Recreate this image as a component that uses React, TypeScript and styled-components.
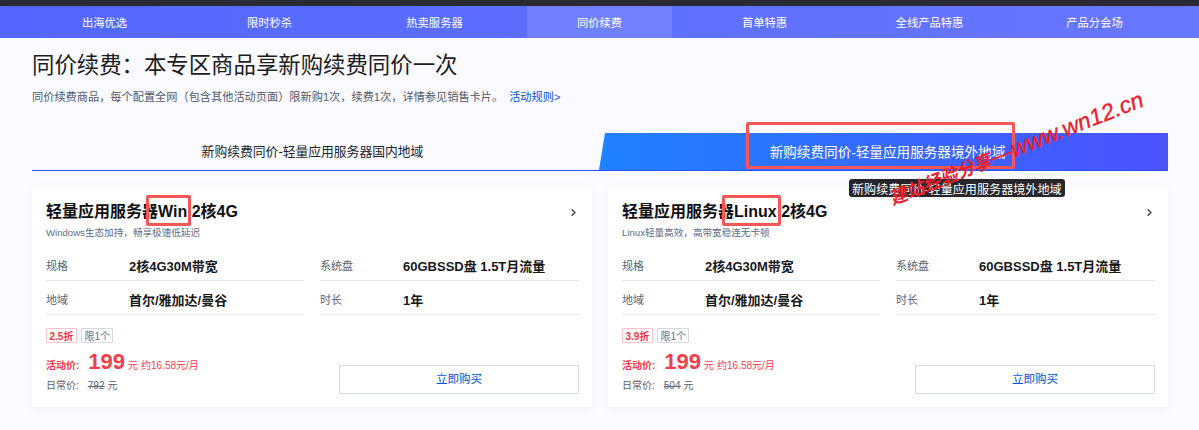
import React, { FC } from 'react';
import styled, { createGlobalStyle } from 'styled-components';
import { ChevronRight } from 'lucide-react';

const NAV_ITEMS = ['出海优选', '限时秒杀', '热卖服务器', '同价续费', '首单特惠', '全线产品特惠', '产品分会场'];

const PRODUCTS = [
  {
    os: 'Win',
    desc: 'Windows生态加持，畅享极速低延迟',
    discount: '2.5折',
    normal: '792',
  },
  {
    os: 'Linux',
    desc: 'Linux轻量高效，高带宽稳连无卡顿',
    discount: '3.9折',
    normal: '504',
  },
];

const GlobalStyle = createGlobalStyle`
  html, body {
    margin: 0;
    padding: 0;
    background: #fafaff;
  }
  body {
    font-family: 'Liberation Sans', 'Noto Sans CJK SC', sans-serif;
    width: 1199px;
    height: 430px;
    overflow: hidden;
  }
  * {
    box-sizing: border-box;
  }
`;

const Page = styled.div`
  position: relative;
  width: 1199px;
  height: 430px;
  overflow: hidden;
`;

const TopBar = styled.div`
  height: 6px;
  background: #2b2a33;
`;

const Nav = styled.nav`
  display: flex;
  justify-content: center;
  gap: 20px;
  height: 32px;
  background: linear-gradient(90deg, #5267ff, #6877ff);
`;

const NavItem = styled.a<{ $active?: boolean }>`
  width: 145px;
  display: flex;
  align-items: center;
  justify-content: center;
  font-size: 11.3px;
  color: #fff;
  background: ${(props) => (props.$active ? 'rgba(255, 255, 255, 0.12)' : 'transparent')};
`;

const Main = styled.main`
  width: 1136px;
  margin-left: 32px;
`;

const Title = styled.h1`
  margin: 14px 0 0;
  font-size: 22.4px;
  line-height: 28px;
  font-weight: 400;
  color: #1c1c22;
`;

const Intro = styled.p`
  margin: 9px 0 0;
  font-size: 11.2px;
  line-height: 16px;
  color: #4f5a6e;
`;

const RuleLink = styled.a`
  margin-left: 6px;
  color: #0052d9;
`;

const Tabs = styled.div`
  display: flex;
  margin-top: 28px;
  height: 38px;
  border-bottom: 1px solid #2b50ff;
`;

const Tab = styled.div<{ $active?: boolean }>`
  position: relative;
  flex: 1;
  display: flex;
  align-items: center;
  justify-content: center;
  padding: ${(props) => (props.$active ? '0 0 2px 8px' : '0 6px 2px 0')};
  font-size: ${(props) => (props.$active ? '13.6px' : '12.8px')};
  color: ${(props) => (props.$active ? '#fff' : '#23252b')};
  background: ${(props) =>
    props.$active ? 'linear-gradient(90deg, #1f82ff, #4b52ff)' : 'transparent'};
  clip-path: ${(props) =>
    props.$active ? 'polygon(6px 0, 100% 0, 100% 100%, 0 100%)' : 'none'};
`;

const TabMark = styled.div`
  position: absolute;
  left: 746px;
  top: 122px;
  width: 269px;
  height: 47px;
  border: 3px solid #f55656;
  border-radius: 2px;
`;

const TabTip = styled.div`
  position: absolute;
  left: 849px;
  top: 179px;
  height: 18px;
  padding: 0 3px;
  display: flex;
  align-items: center;
  font-size: 12.1px;
  color: #fff;
  background: #26262c;
  border-radius: 3px;
`;

const Watermark = styled.div`
  position: absolute;
  left: 866px;
  top: 135px;
  width: 300px;
  text-align: center;
  font-size: 18px;
  font-weight: 700;
  font-style: italic;
  white-space: nowrap;
  color: #e8212a;
  transform: rotate(-21.5deg);
`;

const WatermarkUrl = styled.span`
  font-size: 23px;
  font-weight: 400;
  -webkit-text-stroke: 0.3px #e8212a;
`;

const Cards = styled.div`
  display: flex;
  gap: 16px;
  margin-top: 16px;
`;

const Card = styled.section`
  position: relative;
  flex: 1;
  height: 220px;
  padding: 15px 13px 0 14px;
  background: #fff;
  box-shadow: 0 2px 10px rgba(60, 80, 160, 0.04);
`;

const CardHead = styled.div`
  display: flex;
  align-items: center;
  justify-content: space-between;
`;

const CardTitle = styled.h2`
  margin: 0;
  font-size: 16px;
  line-height: 20px;
  font-weight: 700;
  color: #0f1014;
`;

const Marked = styled.span`
  position: relative;
  &::after {
    content: '';
    position: absolute;
    left: -12px;
    right: -4px;
    top: -8px;
    bottom: -6px;
    border: 3px solid #f55656;
    border-radius: 2px;
  }
`;

const Arrow = styled(ChevronRight)`
  width: 11px;
  height: 11px;
  stroke-width: 3.5;
  color: #4c4f57;
`;

const CardDesc = styled.p`
  margin: 4px 0 0;
  font-size: 9.6px;
  line-height: 14px;
  color: #5d6b85;
`;

const Specs = styled.div`
  display: grid;
  grid-template-columns: 258px 259px;
  column-gap: 16px;
  margin-top: 7px;
`;

const Spec = styled.div`
  display: flex;
  align-items: center;
  height: 34px;
  padding-top: 3px;
  border-bottom: 1px solid #e7e9ee;
`;

const SpecLabel = styled.span`
  width: 83px;
  font-size: 11px;
  color: #5c6370;
`;

const SpecValue = styled.span`
  font-size: 13px;
  font-weight: 700;
  color: #17181c;
`;

const Tags = styled.div`
  display: flex;
  gap: 4px;
  margin-top: 13px;
`;

const Tag = styled.span<{ $red?: boolean }>`
  height: 15px;
  padding: 0 2.5px;
  display: flex;
  align-items: center;
  font-size: 10px;
  font-weight: ${(props) => (props.$red ? 700 : 400)};
  color: ${(props) => (props.$red ? '#f4333f' : '#5a6c8c')};
  border: 1px solid ${(props) => (props.$red ? '#fbc4c8' : '#d5d9e3')};
`;

const ActiveRow = styled.div`
  display: flex;
  align-items: baseline;
  margin-top: 6px;
  height: 26px;
  color: #f63d4a;
  font-size: 10px;
`;

const ActiveLabel = styled.span`
  font-weight: 700;
`;

const BigPrice = styled.span`
  margin: 0 3px 0 9px;
  font-size: 22px;
  font-weight: 700;
`;

const Monthly = styled.span`
  margin-left: 3px;
`;

const NormalRow = styled.div`
  margin-top: 2px;
  font-size: 10px;
  color: #5c6370;
`;

const NormalPrice = styled.s`
  margin: 0 3px 0 9px;
`;

const BuyButton = styled.button`
  position: absolute;
  right: 13px;
  bottom: 13px;
  width: 240px;
  height: 29px;
  padding: 0 0 3px;
  font-family: inherit;
  font-size: 11.5px;
  color: #0052d9;
  background: #fff;
  border: 1px solid #d6dcec;
  cursor: pointer;
`;

const ProductCard: FC<(typeof PRODUCTS)[number]> = ({ os, desc, discount, normal }) => (
  <Card>
    <CardHead>
      <CardTitle>
        轻量应用服务器<Marked>{os}</Marked> 2核4G
      </CardTitle>
      <Arrow />
    </CardHead>
    <CardDesc>{desc}</CardDesc>
    <Specs>
      <Spec>
        <SpecLabel>规格</SpecLabel>
        <SpecValue>2核4G30M带宽</SpecValue>
      </Spec>
      <Spec>
        <SpecLabel>系统盘</SpecLabel>
        <SpecValue>60GBSSD盘 1.5T月流量</SpecValue>
      </Spec>
      <Spec>
        <SpecLabel>地域</SpecLabel>
        <SpecValue>首尔/雅加达/曼谷</SpecValue>
      </Spec>
      <Spec>
        <SpecLabel>时长</SpecLabel>
        <SpecValue>1年</SpecValue>
      </Spec>
    </Specs>
    <Tags>
      <Tag $red>{discount}</Tag>
      <Tag>限1个</Tag>
    </Tags>
    <ActiveRow>
      <ActiveLabel>活动价:</ActiveLabel>
      <BigPrice>199</BigPrice>
      <span>元</span>
      <Monthly>约16.58元/月</Monthly>
    </ActiveRow>
    <NormalRow>
      日常价:
      <NormalPrice>{normal}</NormalPrice>元
    </NormalRow>
    <BuyButton>立即购买</BuyButton>
  </Card>
);

export default function App() {
  return (
    <Page>
      <GlobalStyle />
      <TopBar />
      <Nav>
        {NAV_ITEMS.map((item) => (
          <NavItem key={item} $active={item === '同价续费'}>
            {item}
          </NavItem>
        ))}
      </Nav>
      <Main>
        <Title>同价续费：本专区商品享新购续费同价一次</Title>
        <Intro>
          同价续费商品，每个配置全网（包含其他活动页面）限新购1次，续费1次，详情参见销售卡片。
          <RuleLink>活动规则&gt;</RuleLink>
        </Intro>
        <Tabs>
          <Tab>新购续费同价-轻量应用服务器国内地域</Tab>
          <Tab $active>新购续费同价-轻量应用服务器境外地域</Tab>
        </Tabs>
        <Cards>
          {PRODUCTS.map((product) => (
            <ProductCard key={product.os} {...product} />
          ))}
        </Cards>
      </Main>
      <TabMark />
      <TabTip>新购续费同价-轻量应用服务器境外地域</TabTip>
      <Watermark>
        建站经验分享<WatermarkUrl>—www.wn12.cn</WatermarkUrl>
      </Watermark>
    </Page>
  );
}
